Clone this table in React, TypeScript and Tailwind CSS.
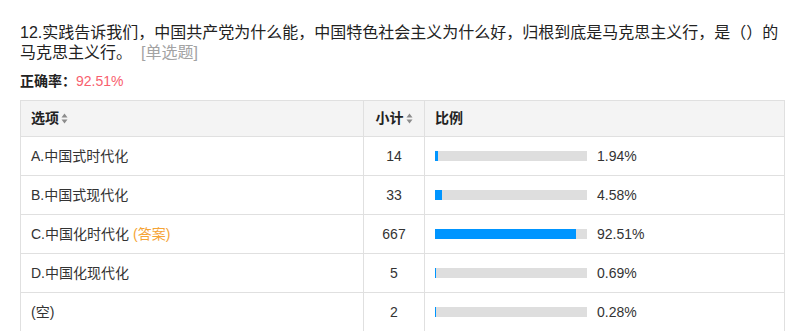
const rows = [
  { label: "A.中国式时代化", count: 14, pct: 1.94 },
  { label: "B.中国式现代化", count: 33, pct: 4.58 },
  { label: "C.中国化时代化", count: 667, pct: 92.51, answer: true },
  { label: "D.中国化现代化", count: 5, pct: 0.69 },
  { label: "(空)", count: 2, pct: 0.28 },
];

const font = { fontFamily: '"Liberation Sans", "Noto Sans CJK SC", sans-serif' };

function SortIcon() {
  return (
    <svg width="7" height="11" viewBox="0 0 7 11" className="ml-[2px] inline-block">
      <path d="M3.5 0.5 L6.5 4.5 L0.5 4.5 Z" fill="#8c8c8c" />
      <path d="M3.5 10.5 L6.5 6.5 L0.5 6.5 Z" fill="#8c8c8c" />
    </svg>
  );
}

export default function App() {
  return (
    <div className="min-h-screen bg-white pl-5 pt-[23px] text-[#333]" style={font}>
      <p className="w-[762px] text-[16px] leading-[20px] text-[#222]">
        12.实践告诉我们，中国共产党为什么能，中国特色社会主义为什么好，归根到底是马克思主义行，是（）的马克思主义行。
        <span className="ml-[9px] text-[#a3a3a3]">[单选题]</span>
      </p>
      <div className="mt-[9px] text-[14px] leading-[18px]">
        <span className="font-bold text-[#222]">正确率：</span>
        <span className="text-[#f8606e]">92.51%</span>
      </div>

      <div className="mt-[10px] w-[765px] border border-b-0 border-[#e0e0e0] text-[14px]">
        <div className="grid h-[36px] grid-cols-[343px_61px_1fr] border-b border-[#e0e0e0] bg-[#f4f4f4] font-bold text-[#222]">
          <div className="flex items-center border-r border-[#e0e0e0] pl-[10px]">
            选项
            <SortIcon />
          </div>
          <div className="flex items-center justify-center border-r border-[#e0e0e0]">
            小计
            <SortIcon />
          </div>
          <div className="flex items-center pl-[10px]">比例</div>
        </div>
        {rows.map((r) => (
          <div
            key={r.label}
            className="grid h-[39px] grid-cols-[343px_61px_1fr] border-b border-[#e0e0e0]"
          >
            <div className="flex items-center border-r border-[#e0e0e0] pl-[10px]">
              {r.label}
              {r.answer && <span className="ml-1 text-[#f5a436]">(答案)</span>}
            </div>
            <div className="flex items-center justify-center border-r border-[#e0e0e0]">
              {r.count}
            </div>
            <div className="flex items-center pl-[10px]">
              <div className="h-[10px] w-[152px] bg-[#dedede]">
                <div
                  className="h-full bg-[#0095ff]"
                  style={{ width: Math.max(1, Math.round((152 * r.pct) / 100)) }}
                />
              </div>
              <span className="ml-[10px]">{r.pct.toFixed(2)}%</span>
            </div>
          </div>
        ))}
      </div>
    </div>
  );
}
